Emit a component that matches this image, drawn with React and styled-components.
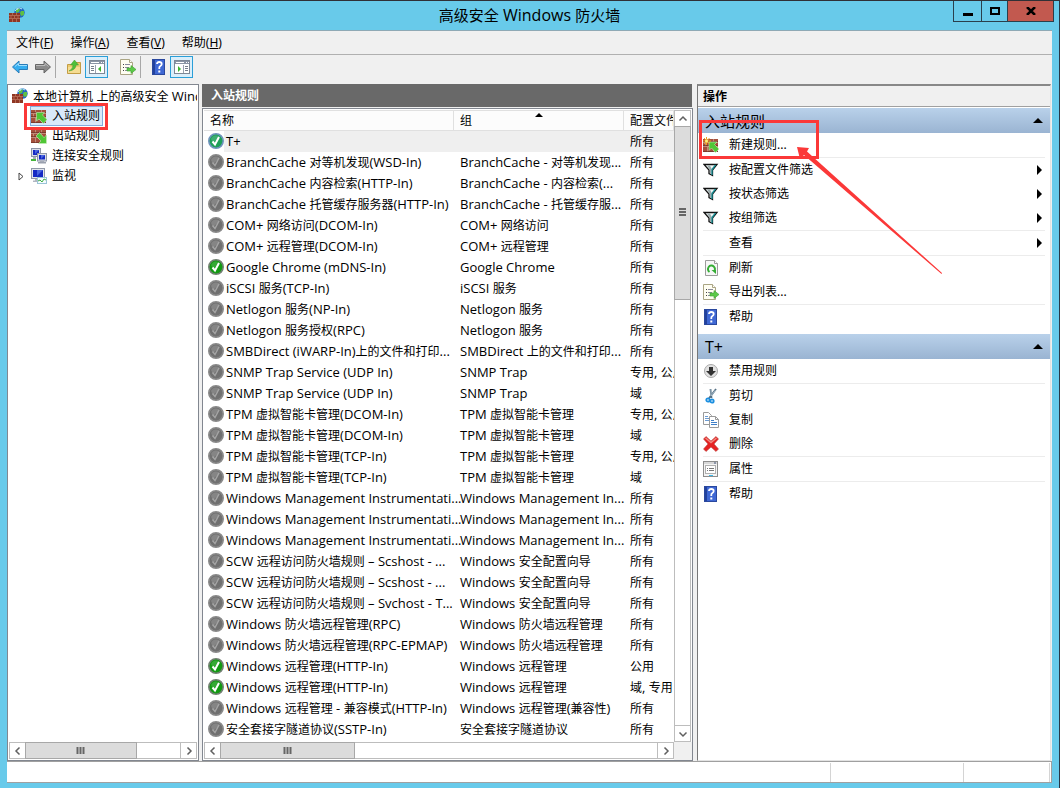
import React from 'react';
import styled, { createGlobalStyle } from 'styled-components';

const sans = '"Noto Sans", "Noto Sans CJK SC", sans-serif';

const Global = createGlobalStyle`
  * { box-sizing: border-box; }
  body { margin: 0; font: 12px/20px ${sans}; color: #000; background: #68caea; }
  button { font: inherit; color: inherit; padding: 0; border: 0; background: none; text-align: left; }
`;

const LatinRun = styled.span`
  font-family: "Open Sans", "Noto Sans", sans-serif;
  font-size: ${p => (p.$large ? 16 : 13)}px;
`;

/* Latin runs are set one pixel larger than the Chinese text beside them. */
function Label({ children, large }) {
  return children.split(/([\x20-\x7e–]+)/).map((part, i) =>
    i % 2 ? <LatinRun key={i} $large={large}>{part}</LatinRun> : part
  );
}

/* ---------- icons ---------- */
const Svg = styled.svg`display: block; flex: none;`;
const Icon = ({ children, size = 16 }) => (
  <Svg width={size} height={size} viewBox="0 0 16 16" aria-hidden="true">{children}</Svg>
);

const Bricks = ({ x = 0, y = 2, w = 15, h = 13 }) => (
  <g>
    <rect x={x} y={y} width={w} height={h} fill="#a4503c" />
    <path d={`M${x} ${y + 3.5}h${w}M${x} ${y + 7.5}h${w}M${x + 4.5} ${y}v3M${x + 10.5} ${y}v3M${x + 2.5} ${y + 4}v3M${x + 7.5} ${y + 4}v3M${x + 4.5} ${y + 8}v${h - 8}M${x + 10.5} ${y + 8}v${h - 8}`} stroke="#c08a78" fill="none" />
    <path d={`M${x} ${y + 2.5}h${w}M${x} ${y + 6.5}h${w}M${x} ${y + h - .5}h${w}`} stroke="#6d3226" opacity=".7" />
  </g>
);

const FirewallIcon = () => (
  <Icon>
    <circle cx="10.500" cy="5.500" r="5.200" fill="#2467c0" />
    <path d="M7 2c2-1 3-1 4 0l-1 3-3 1zM12 4l3 0 0 4-3 1-1-3z" fill="#5fc043" />
    <path d="M7.500 1.500q3.500-1.500 5.500 .5M6 4q1-2 3-2" stroke="#b9ecf8" fill="none" />
    <rect x="0" y="6" width="11" height="9" fill="#8f3624" />
    <path d="M0 8.500h11M0 11.500h11M3.500 6v2M7.500 6v2M2 9v2M5.500 9v2M9 9v2M3.500 12v3M7.500 12v3" stroke="#bd725c" fill="none" strokeWidth=".8" />
  </Icon>
);

const InboundIcon = () => (
  <Icon>
    <Bricks />
    <path d="M5.500 4.500h8L11.500 7l4.500 4.500-3.500 4L8 11l-2.500 2z" fill="#4fc636" stroke="#c9efbd" strokeWidth=".6" />
  </Icon>
);
const OutboundIcon = () => (
  <Icon>
    <Bricks />
    <path d="M15.500 15.500h-8l2.500-2.500L5 8l3.500-3.500L13 9.500l2.500-2.500z" fill="#4fc636" stroke="#c9efbd" strokeWidth=".6" />
  </Icon>
);
const NewRuleIcon = () => (
  <Icon>
    <Bricks />
    <path d="M6 5h8l-2.500 2.500L16 12l-3.500 3.500L8.500 11 6 13.500z" fill="#4fc636" stroke="#c9efbd" strokeWidth=".6" />
    <path d="M3.500 0v8M0 4h8M1 1l5.500 6M6.500 1L1 7" stroke="#f0a020" />
    <circle cx="3.500" cy="4" r="1.500" fill="#fff07a" />
  </Icon>
);
const ConnectionIcon = () => (
  <Icon>
    <rect x=".5" y=".5" width="9" height="8" fill="#d8dce6" stroke="#8e95a6" />
    <rect x="2" y="2" width="6" height="5" fill="#1429c4" />
    <rect x="6.500" y="5.500" width="9" height="7.500" fill="#d8dce6" stroke="#8e95a6" />
    <rect x="8" y="7" width="6" height="4.500" fill="#1429c4" />
    <path d="M4 2h4l-4 4zM10 7h4l-4 4z" fill="#6c8cf0" opacity=".6" />
    <path d="M2 9h3v2H2zM9 13h4v1H9z" fill="#a6acb9" />
    <path d="M0 11h5v2H0z" fill="#45b53a" />
    <path d="M7 14h8v1.500H7z" fill="#9aa0ae" />
  </Icon>
);
const MonitorIcon = () => (
  <Icon>
    <rect x=".5" y=".5" width="13" height="10" fill="#e2e5ec" stroke="#9299a8" />
    <rect x="2" y="2" width="10" height="7" fill="#1429c4" />
    <path d="M6 2h6l-6 6z" fill="#5c7cec" opacity=".7" />
    <path d="M4 11h5v1.500H4zM2 12.500h6V14H2z" fill="#b2b7c2" />
    <rect x="6.500" y="9.500" width="9" height="6" fill="#f4fbff" stroke="#9bc4d8" />
    <path d="M7 13l2-1 2 2 2-3 2 1" stroke="#3fae3a" fill="none" />
  </Icon>
);
const CheckIcon = ({ tone }) => {
  const fill = { off: '#707070', on: '#129a12', picked: '#1e9f58' }[tone];
  const ring = { off: '#8a8a8a', on: '#728072', picked: '#6f93bd' }[tone];
  return (
    <Icon>
      <circle cx="8" cy="8" r="7.200" fill={fill} stroke={ring} strokeWidth="1.600" />
      <path d="M3 6a5.500 5.500 0 0 1 9-2L5 10z" fill="#fff" opacity=".15" />
      <path d="M4.500 8.500l2.500 3L11 4" fill="none" stroke={tone === 'off' ? '#a4a4a4' : '#fff'} strokeWidth={tone === 'off' ? 1.500 : 2} />
    </Icon>
  );
};
const FilterIcon = () => (
  <Icon>
    <path d="M1 2.500h13L9.500 8v5.500L6 11.500V8z" fill="#f4f8f8" stroke="#111" strokeWidth="1.300" />
    <path d="M4 3.500h3l1.500 3v5.500l-1.500-1V8z" fill="#9aa9aa" />
    <path d="M12.500 3L9 7.500V13" stroke="#168f95" fill="none" strokeWidth="1.300" />
  </Icon>
);
const RefreshIcon = () => (
  <Icon>
    <path d="M2.500.5h9l3 3v12h-12z" fill="#f7f7f7" stroke="#9b9b9b" />
    <path d="M11.500.5v3h3" fill="#fff" stroke="#9b9b9b" />
    <path d="M6.500 12A3.500 3.500 0 1 1 11 11.500" fill="none" stroke="#35ad35" strokeWidth="2" />
    <path d="M8.500 10H13v4z" fill="#35ad35" />
  </Icon>
);
const ExportIcon = () => (
  <Icon>
    <path d="M.5.5h9l3 3v12H.5z" fill="#fffef2" stroke="#aaa584" />
    <path d="M9.500.5v3h3" fill="#fff" stroke="#aaa584" />
    <path d="M3 5.500h1M3 8.500h1M3 11.500h1" stroke="#444" />
    <path d="M5 5.500h5M5 8.500h4M5 11.500h4" stroke="#8a8a9c" />
    <path d="M7 9h4V6.500l5 4-5 4V12H7z" fill="#5cc948" stroke="#3d9d30" strokeWidth=".6" />
  </Icon>
);
const HelpIcon = () => (
  <Icon>
    <rect x="1.500" y=".5" width="12" height="15" fill="#3f68d4" stroke="#2a489e" />
    <path d="M2 1h2v14H2z" fill="#23429c" />
    <path d="M6 5q0-2 2.300-2T10.700 5q0 1.300-1.300 2T8.300 9v1" fill="none" stroke="#fff" strokeWidth="1.800" />
    <rect x="7.300" y="11.500" width="2" height="2" fill="#fff" />
  </Icon>
);
const DisableIcon = () => (
  <Icon>
    <circle cx="8" cy="8" r="6.500" fill="#e2e2e2" stroke="#aaa" />
    <path d="M6 4h4v4h3l-5 5-5-5h3z" fill="#333" />
  </Icon>
);
const CutIcon = () => (
  <Icon>
    <path d="M7.500 1L8.500 10M13 1L5.500 11" stroke="#557084" strokeWidth="1.800" />
    <path d="M8 1v7M12.500 2L8 8" stroke="#c3d2de" strokeWidth=".7" />
    <circle cx="5" cy="12" r="1.700" fill="none" stroke="#1c8fe0" strokeWidth="1.800" />
    <circle cx="9" cy="13" r="1.700" fill="none" stroke="#1c8fe0" strokeWidth="1.800" />
  </Icon>
);
const CopyIcon = () => (
  <Icon>
    <path d="M.5.5h5l3 3v9h-8z" fill="#fff" stroke="#9a9a9a" />
    <path d="M2 4.500h3M2 6.500h4M2 8.500h4" stroke="#6b9bd2" />
    <path d="M6.500 4.500h6l3 3v8h-9z" fill="#fff" stroke="#9a9a9a" />
    <path d="M12.500 4.500v3h3" fill="none" stroke="#9a9a9a" />
    <path d="M8 8.500h3M8 10.500h6M8 12.500h6" stroke="#3f7fc8" />
  </Icon>
);
const DeleteIcon = () => (
  <Icon>
    <path d="M3 .5L8 5l5-4.500 2.500 2.500L11 8l4.500 5-2.500 2.500L8 11l-5 4.500L.5 13 5 8 .5 3z" fill="#e52222" stroke="#b94a44" strokeWidth=".6" />
    <path d="M2.500 2L8 6.500 13.500 2" stroke="#f28a80" strokeWidth="1.500" fill="none" />
  </Icon>
);
const PropertiesIcon = () => (
  <Icon>
    <rect x=".5" y=".5" width="14" height="15" fill="#f4f4f4" stroke="#8d8d8d" />
    <path d="M1 2h13" stroke="#bcbcbc" />
    <rect x="2.500" y="4.500" width="10" height="8" fill="#fff" stroke="#b0b0b0" />
    <path d="M4 7.500h1M4 9.500h1M6 7.500h5M6 9.500h5" stroke="#777" />
    <path d="M6 14.500h4" stroke="#3cb8e8" />
    <path d="M11 2h2" stroke="#44557d" />
  </Icon>
);
const ArrowIcon = ({ back }) => (
  <Icon>
    <path
      d={back ? 'M.5 8L7 2v3.500h8.500v5H7V14z' : 'M15.500 8L9 2v3.500H.5v5H9V14z'}
      fill={back ? '#35aef0' : '#8b8b8b'} stroke={back ? '#2a7cb8' : '#666'}
    />
    <path d={back ? 'M3 7.500l3.500-3v2H15' : 'M1 6.500h9v-2l3.500 3'} stroke={back ? '#9fe0ff' : '#bbb'} fill="none" />
  </Icon>
);
const FolderUpIcon = () => (
  <Icon>
    <path d="M1.500 5.500h5l1-2h7v11h-13z" fill="#edcb70" stroke="#c39d45" />
    <path d="M2 8h12v6H2z" fill="#f5dc92" />
    <path d="M3 12q4-2 4-6H4.500L8.500 1l4 5H10q0 5-7 6z" fill="#4fbf3a" stroke="#3b9a2a" strokeWidth=".5" />
  </Icon>
);
const PaneIcon = ({ right }) => (
  <Icon>
    <rect x=".5" y="1.500" width="15" height="13" fill="#fff" stroke="#7d8796" />
    <path d="M1 2h14v3H1z" fill="#8b95a5" />
    <path d="M2 3.500h8M12 3.500h1M14 3.500h1" stroke="#fff" />
    <path d={right ? 'M9.500 6v8' : 'M6.500 6v8'} stroke="#9aa3b0" />
    <path d={right ? 'M11 7.500h3M11 9.500h3M11 11.500h3' : 'M2 7.500h3M2 9.500h3M2 11.500h3'} stroke="#777f8c" />
    <path d={right ? 'M4 7l3 3-3 3z' : 'M12 7l-3 3 3 3z'} fill="#3db52e" />
  </Icon>
);

/* ---------- window frame ---------- */
const Window = styled.div`
  min-height: 100vh; display: flex; flex-direction: column; position: relative;
  padding: 0 7px 5px; background: #68caea;
  border-top: 1px solid #303036; border-right: 1px solid #283848;
`;
const TitleBar = styled.header`
  height: 29px; display: grid; grid-template-columns: 120px 1fr 124px; margin-right: -2px; padding-left: 2px;
`;
const TitleIcon = styled.div`padding-top: 6px;`;
const Title = styled.h1`margin: 0; font-size: 15px; line-height: 28px; font-weight: 400; text-align: center;`;
const WindowButtons = styled.div`display: flex; justify-content: flex-end; align-items: flex-start;`;
const WindowButton = styled.button`
  width: ${p => p.$w}px; height: 21px; display: grid; place-items: center;
  border: 1px solid #2a3f4c; border-top: 0; margin-left: -1px;
  background: ${p => (p.$close ? '#c2594f' : 'transparent')};
`;
const Client = styled.main`flex: 1; display: flex; flex-direction: column; background: #f0f0f0; border-top: 1px solid #8fa9b5;`;
const MenuBar = styled.nav`height: 24px; display: flex; gap: 17px; padding: 1px 9px 0; border-bottom: 1px solid #b0b0b0;`;
const MenuItem = styled.button`line-height: 22px;`;
const ToolBar = styled.div`height: 29px; display: flex; align-items: center; padding: 0 1px 5px;`;
const Tool = styled.button`
  width: 23px; height: 22px; display: grid; place-items: center;
  border: 1px solid ${p => (p.$on ? '#2a9fd8' : 'transparent')};
  background: ${p => (p.$on ? '#daeefa' : 'none')};
`;
const Divider = styled.span`width: 1px; height: 22px; margin: 0 6px 0 1px; background: #a8a8a8;`;
const Spacer = styled.span`width: 8px;`;

const Panels = styled.div`
  flex: 1; display: grid; gap: 3px; min-height: 0;
  grid-template-columns: 192px minmax(0, 491fr) minmax(0, 356fr);
`;
const Pane = styled.section`
  min-width: 0; display: flex; flex-direction: column; background: #fff; border: 1px solid #828790;
`;

/* ---------- scroll bars ---------- */
const HBar = styled.div`display: flex; height: 17px; margin: 0 1px 1px; border: 1px solid #bdbdbd; background: #fff;`;
const VBar = styled.div`display: flex; flex-direction: column; width: 17px; border: 1px solid #bdbdbd; background: #fff;`;
const BarButton = styled.button`width: 15px; height: 15px; flex: none; display: grid; place-items: center;`;
const Thumb = styled.div`
  display: grid; place-items: center; background: #dcdcdc; border: 1px solid #a8a8a8;
  flex: 0 0 ${p => p.$share}%; margin: ${p => (p.$vertical ? '0 -1px' : '-1px 0')};
`;
const Track = styled.div`
  flex: 1; display: flex; flex-direction: ${p => (p.$vertical ? 'column' : 'row')};
  border: solid #bdbdbd; border-width: ${p => (p.$vertical ? '0 0 1px' : '0 1px 0 0')};
`;
const chevrons = { left: 'M6.500 1.500L3 5l3.500 3.500', right: 'M3.500 1.500L7 5l-3.500 3.500', up: 'M1.500 6.500L5 3l3.500 3.500', down: 'M1.500 3.500L5 7l3.500-3.500' };
const Chevron = ({ dir }) => (
  <Svg width="10" height="10" viewBox="0 0 10 10" aria-hidden="true">
    <path d={chevrons[dir]} fill="none" stroke="#606060" strokeWidth="1.500" />
  </Svg>
);
const Grip = ({ vertical }) => (
  <Svg width="9" height="9" viewBox="0 0 9 9" aria-hidden="true">
    <path d={vertical ? 'M1 1h7M1 4h7M1 7h7' : 'M1.500 1v7M4.500 1v7M7.500 1v7'} stroke="#666" strokeWidth="2" />
  </Svg>
);
const HScroll = ({ share }) => (
  <HBar>
    <BarButton aria-label="向左滚动"><Chevron dir="left" /></BarButton>
    <Track><Thumb $share={share}><Grip /></Thumb></Track>
    <BarButton aria-label="向右滚动"><Chevron dir="right" /></BarButton>
  </HBar>
);

/* ---------- tree ---------- */
const Tree = styled.ul`flex: 1; list-style: none; margin: 0 1px 0 0; padding: 1px 0 0; overflow: hidden;`;
const TreeRow = styled.li`
  position: relative; height: 20px; display: flex; align-items: center; white-space: nowrap;
  padding-left: ${p => (p.$root ? 4 : 10)}px;
`;
const Twist = styled.span`width: 12px; display: flex;`;
const TreeLink = styled.button`
  display: flex; align-items: center; gap: 5px; height: 20px;
  padding: 0 ${p => (p.$root ? 0 : 3)}px 0 ${p => (p.$root ? 0 : 1)}px; line-height: 18px;
  ${p => p.$selected && 'background: #d9e9f9; box-shadow: inset 0 0 0 1px #84acdd;'}
`;
const TreeMark = styled.span`
  position: absolute; z-index: 2; left: 16px; top: -3px; width: 84px; height: 27px;
  border: 3px solid #fb3838; pointer-events: none;
`;

/* ---------- rule list ---------- */
const Middle = styled.div`min-width: 0; display: flex; flex-direction: column;`;
const Caption = styled.h2`
  margin: 0 1px 1px 0; height: 23px; padding-left: 9px; background: #696969; color: #fff;
  font-size: 12px; line-height: 24px; font-weight: 700;
`;
const ListPane = styled(Pane)`flex: 1;`;
const ListBody = styled.div`flex: 1; display: flex; padding: 1px 1px 0;`;
const TableWrap = styled.div`flex: 1; min-width: 0; overflow: hidden;`;
const Table = styled.table`width: 100%; table-layout: fixed; border-collapse: separate; border-spacing: 0;`;
const HeadCell = styled.th`
  position: relative; height: 21px; padding: 0 0 0 6px; text-align: left; font-weight: 400; line-height: 19px;
  background: #fcfcfc; border: solid #e0e0e0; border-width: 1px 1px 1px 0; white-space: nowrap; overflow: hidden;
  width: ${p => p.$w || 'auto'};
`;
const SortMark = styled.span`
  position: absolute; left: 81px; top: 2px; border: solid transparent; border-width: 0 4px 4px;
  border-bottom-color: #000;
`;
const Row = styled.tr`height: 21px; background: ${p => (p.$picked ? 'linear-gradient(90deg, #fff 20px, #efefef 20px)' : '#fff')};`;
const Cell = styled.td`
  height: 21px; padding: 0 0 0 6px; line-height: 21px; white-space: nowrap; vertical-align: top;
`;
const NameCell = styled(Cell)`padding-left: 4px;`;
const NameBox = styled.span`
  display: flex; align-items: flex-start; gap: 2px; height: 21px;
  > svg { margin-top: 2px; }
`;
const BarRow = styled.div`display: flex; padding-right: 17px; background: linear-gradient(#f0f0f0, #f0f0f0) right / 18px 100% no-repeat; > * { flex: 1; }`;

/* ---------- actions ---------- */
const ActionsPane = styled(Pane)`
  position: relative; border-color: #888 #e3e3e3 #e3e3e3 #777; border-width: 2px 1px 1px 1px; margin: 0 1px;
`;
const ActionsTitle = styled.h2`
  margin: 0 0 1px; height: 21px; padding-left: 5px; background: #f0f0f0; border-bottom: 1px solid #a0a0a0;
  font-size: 12px; line-height: 22px; font-weight: 700;
`;
const GroupHead = styled.button`
  width: 100%; height: 25px; display: flex; align-items: center; justify-content: space-between;
  padding: 0 7px; font-size: 15px; line-height: 24px; background: linear-gradient(#b9d1ea, #9ab4d2);
`;
const Caret = styled.span`
  border: solid transparent; ${p => (p.$side
    ? 'border-width: 5px 0 5px 5px; border-left-color: #000;'
    : 'border-width: 0 5px 5px; border-bottom-color: #000;')}
`;
const ActionList = styled.ul`list-style: none; margin: 0 0 5px; padding: 0 5px;`;
const ActionItem = styled.li`position: relative; border-top: ${p => (p.$rule ? 1 : 0)}px solid #ececec;`;
const Action = styled.button`width: 100%; height: 24px; display: flex; align-items: center; padding-right: 3px; line-height: 22px;`;
const ActionIcon = styled.span`width: 26px;`;
const ActionText = styled.span`flex: 1;`;
const ActionMark = styled.span`
  position: absolute; z-index: 2; left: -4px; top: -13px; width: 120px; height: 39px;
  border: 3px solid #fb3838; pointer-events: none;
`;
const Pointer = styled.svg`position: absolute; z-index: 3; left: 99px; top: 60px; pointer-events: none;`;

const StatusBar = styled.footer`
  height: 22px; display: flex; background: #fff; border: solid #a0a0a0; border-width: 1px 1px 1px 0; padding: 1px 1px 0;
`;
const StatusCell = styled.span`flex: ${p => p.$flex}; border-right: 1px solid #d4d4d4;`;

/* ---------- data ---------- */
const rules = [
  ['T+', '', '所有', 'picked'],
  ['BranchCache 对等机发现(WSD-In)', 'BranchCache - 对等机发现...', '所有'],
  ['BranchCache 内容检索(HTTP-In)', 'BranchCache - 内容检索(...', '所有'],
  ['BranchCache 托管缓存服务器(HTTP-In)', 'BranchCache - 托管缓存服...', '所有'],
  ['COM+ 网络访问(DCOM-In)', 'COM+ 网络访问', '所有'],
  ['COM+ 远程管理(DCOM-In)', 'COM+ 远程管理', '所有'],
  ['Google Chrome (mDNS-In)', 'Google Chrome', '所有', 'on'],
  ['iSCSI 服务(TCP-In)', 'iSCSI 服务', '所有'],
  ['Netlogon 服务(NP-In)', 'Netlogon 服务', '所有'],
  ['Netlogon 服务授权(RPC)', 'Netlogon 服务', '所有'],
  ['SMBDirect (iWARP-In)上的文件和打印...', 'SMBDirect 上的文件和打印...', '所有'],
  ['SNMP Trap Service (UDP In)', 'SNMP Trap', '专用, 公用'],
  ['SNMP Trap Service (UDP In)', 'SNMP Trap', '域'],
  ['TPM 虚拟智能卡管理(DCOM-In)', 'TPM 虚拟智能卡管理', '专用, 公用'],
  ['TPM 虚拟智能卡管理(DCOM-In)', 'TPM 虚拟智能卡管理', '域'],
  ['TPM 虚拟智能卡管理(TCP-In)', 'TPM 虚拟智能卡管理', '专用, 公用'],
  ['TPM 虚拟智能卡管理(TCP-In)', 'TPM 虚拟智能卡管理', '域'],
  ['Windows Management Instrumentati...', 'Windows Management In...', '所有'],
  ['Windows Management Instrumentati...', 'Windows Management In...', '所有'],
  ['Windows Management Instrumentati...', 'Windows Management In...', '所有'],
  ['SCW 远程访问防火墙规则 – Scshost - ...', 'Windows 安全配置向导', '所有'],
  ['SCW 远程访问防火墙规则 – Scshost - ...', 'Windows 安全配置向导', '所有'],
  ['SCW 远程访问防火墙规则 – Svchost - T...', 'Windows 安全配置向导', '所有'],
  ['Windows 防火墙远程管理(RPC)', 'Windows 防火墙远程管理', '所有'],
  ['Windows 防火墙远程管理(RPC-EPMAP)', 'Windows 防火墙远程管理', '所有'],
  ['Windows 远程管理(HTTP-In)', 'Windows 远程管理', '公用', 'on'],
  ['Windows 远程管理(HTTP-In)', 'Windows 远程管理', '域, 专用', 'on'],
  ['Windows 远程管理 - 兼容模式(HTTP-In)', 'Windows 远程管理(兼容性)', '所有'],
  ['安全套接字隧道协议(SSTP-In)', '安全套接字隧道协议', '所有'],
];

const menus = [['文件', 'F'], ['操作', 'A'], ['查看', 'V'], ['帮助', 'H']];

const branches = [
  { text: '入站规则', icon: <InboundIcon />, selected: true },
  { text: '出站规则', icon: <OutboundIcon /> },
  { text: '连接安全规则', icon: <ConnectionIcon /> },
  { text: '监视', icon: <MonitorIcon />, closed: true },
];

const groups = [
  ['入站规则', [
    { text: '新建规则...', icon: <NewRuleIcon />, mark: true },
    { text: '按配置文件筛选', icon: <FilterIcon />, rule: true, more: true },
    { text: '按状态筛选', icon: <FilterIcon />, more: true },
    { text: '按组筛选', icon: <FilterIcon />, more: true },
    { text: '查看', rule: true, more: true },
    { text: '刷新', icon: <RefreshIcon />, rule: true },
    { text: '导出列表...', icon: <ExportIcon /> },
    { text: '帮助', icon: <HelpIcon />, rule: true },
  ]],
  ['T+', [
    { text: '禁用规则', icon: <DisableIcon /> },
    { text: '剪切', icon: <CutIcon />, rule: true },
    { text: '复制', icon: <CopyIcon /> },
    { text: '删除', icon: <DeleteIcon /> },
    { text: '属性', icon: <PropertiesIcon />, rule: true },
    { text: '帮助', icon: <HelpIcon />, rule: true },
  ]],
];

export default function App() {
  return (
    <>
      <Global />
      <Window>
        <TitleBar>
          <TitleIcon><FirewallIcon /></TitleIcon>
          <Title><Label large>高级安全 Windows 防火墙</Label></Title>
          <WindowButtons>
            <WindowButton $w={29} aria-label="最小化">
              <Svg width="10" height="10"><path d="M0 7h10v3H0z" /></Svg>
            </WindowButton>
            <WindowButton $w={27} aria-label="最大化">
              <Svg width="10" height="8"><path d="M1 1h8v6H1z" fill="none" stroke="#000" strokeWidth="2" /></Svg>
            </WindowButton>
            <WindowButton $w={47} $close aria-label="关闭">
              <Svg width="10" height="8"><path d="M1 0l8 8M9 0L1 8" stroke="#000" strokeWidth="2.500" /></Svg>
            </WindowButton>
          </WindowButtons>
        </TitleBar>
        <Client>
          <MenuBar>
            {menus.map(([name, key]) => (
              <MenuItem key={key}>{name}(<u>{key}</u>)</MenuItem>
            ))}
          </MenuBar>
          <ToolBar>
            <Tool aria-label="后退"><ArrowIcon back /></Tool>
            <Tool aria-label="前进"><ArrowIcon /></Tool>
            <Divider />
            <Tool aria-label="上一级"><FolderUpIcon /></Tool>
            <Tool $on aria-label="显示控制台树"><PaneIcon /></Tool>
            <Spacer />
            <Tool aria-label="导出列表"><ExportIcon /></Tool>
            <Divider />
            <Tool aria-label="帮助"><HelpIcon /></Tool>
            <Tool $on aria-label="显示操作窗格"><PaneIcon right /></Tool>
          </ToolBar>
          <Panels>
            <Pane>
              <Tree>
                <TreeRow $root>
                  <TreeLink $root><FirewallIcon /><span><Label>本地计算机 上的高级安全 Windows 防火墙</Label></span></TreeLink>
                </TreeRow>
                {branches.map(b => (
                  <TreeRow key={b.text}>
                    <Twist>
                      {b.closed && <Svg width="6" height="9"><path d="M1 1l4 3.500-4 3.500z" fill="#fff" stroke="#444" /></Svg>}
                    </Twist>
                    <TreeLink $selected={b.selected}>{b.icon}<span>{b.text}</span></TreeLink>
                    {b.selected && <TreeMark />}
                  </TreeRow>
                ))}
              </Tree>
              <HScroll share={72} />
            </Pane>
            <Middle>
              <Caption>入站规则</Caption>
              <ListPane>
                <ListBody>
                  <TableWrap>
                    <Table>
                      <thead>
                        <tr>
                          <HeadCell $w="250px">名称</HeadCell>
                          <HeadCell $w="170px">组<SortMark /></HeadCell>
                          <HeadCell>配置文件</HeadCell>
                        </tr>
                      </thead>
                      <tbody>
                        {rules.map(([name, group, profile, tone], i) => (
                          <Row key={i} $picked={tone === 'picked'}>
                            <NameCell><NameBox><CheckIcon tone={tone || 'off'} /><span><Label>{name}</Label></span></NameBox></NameCell>
                            <Cell><Label>{group}</Label></Cell>
                            <Cell><Label>{profile}</Label></Cell>
                          </Row>
                        ))}
                      </tbody>
                    </Table>
                  </TableWrap>
                  <VBar>
                    <BarButton aria-label="向上滚动"><Chevron dir="up" /></BarButton>
                    <Track $vertical><Thumb $vertical $share={29}><Grip vertical /></Thumb></Track>
                    <BarButton aria-label="向下滚动"><Chevron dir="down" /></BarButton>
                  </VBar>
                </ListBody>
                <BarRow><HScroll share={31} /></BarRow>
              </ListPane>
            </Middle>
            <ActionsPane>
              <ActionsTitle>操作</ActionsTitle>
              {groups.map(([head, items]) => (
                <React.Fragment key={head}>
                  <GroupHead><span><Label large>{head}</Label></span><Caret /></GroupHead>
                  <ActionList>
                    {items.map(a => (
                      <ActionItem key={a.text} $rule={a.rule}>
                        <Action>
                          <ActionIcon>{a.icon}</ActionIcon>
                          <ActionText>{a.text}</ActionText>
                          {a.more && <Caret $side />}
                        </Action>
                        {a.mark && <ActionMark />}
                      </ActionItem>
                    ))}
                  </ActionList>
                </React.Fragment>
              ))}
              <Pointer width="146" height="130" viewBox="0 0 146 130" aria-hidden="true">
                <path d="M0 1L12 2 10 5.500 145 127 144.500 128 7 9 3 13z" fill="#fb3838" />
              </Pointer>
            </ActionsPane>
          </Panels>
          <StatusBar><StatusCell $flex="826" /><StatusCell $flex="133" /><StatusCell $flex="85" /></StatusBar>
        </Client>
      </Window>
    </>
  );
}
